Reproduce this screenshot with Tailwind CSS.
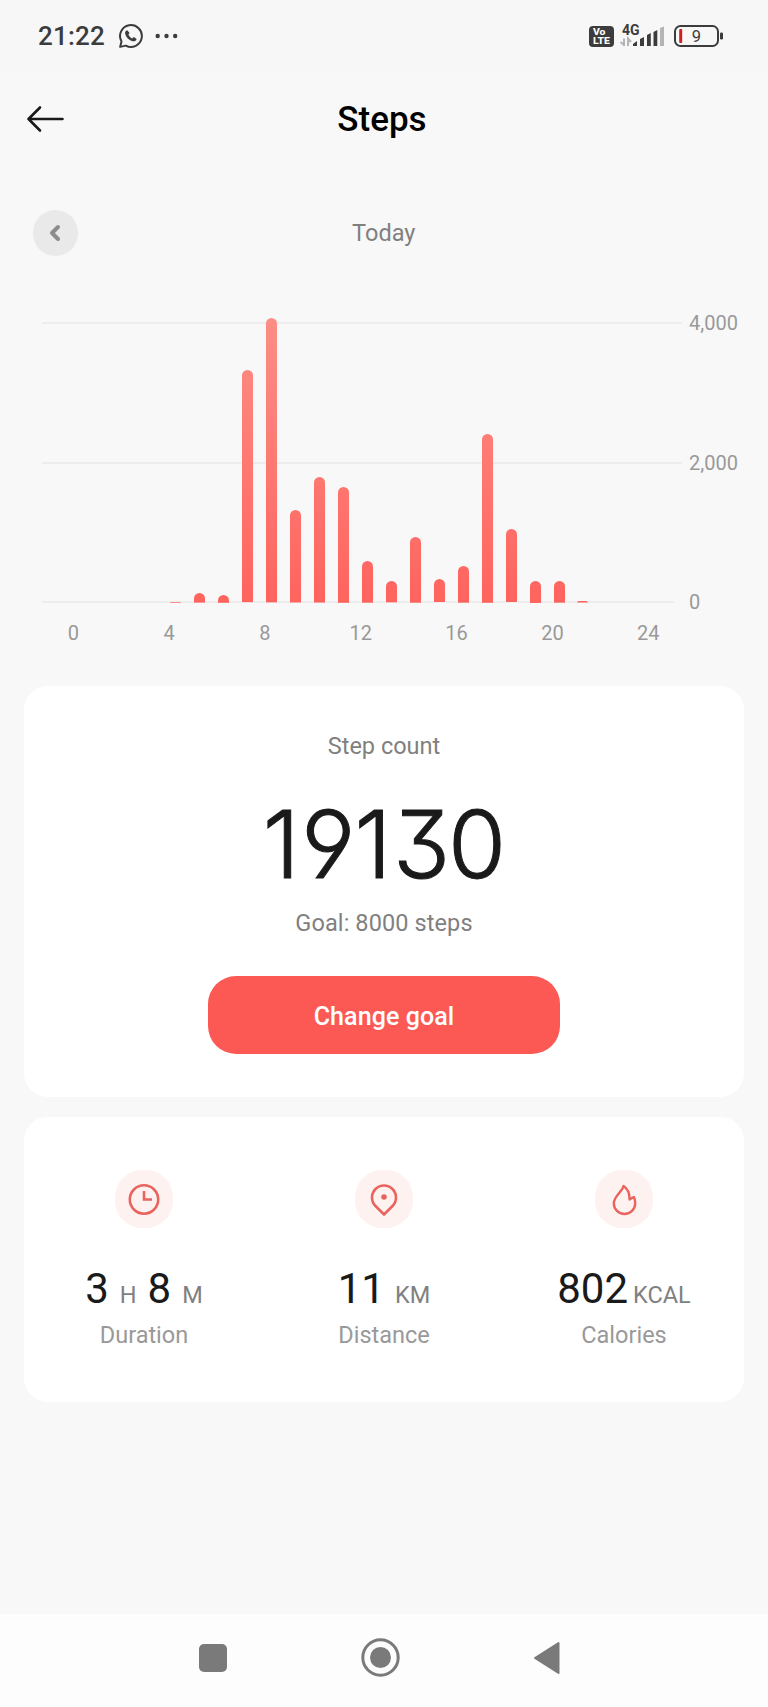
<!DOCTYPE html>
<html lang="en">
<head>
  <meta charset="UTF-8" />
  <meta name="viewport" content="width=device-width, initial-scale=1.0" />
  <title>Steps</title>
  <script src="https://cdn.jsdelivr.net/npm/@tailwindcss/browser@4"></script>
</head>
<body class="bg-[#f8f8f8] font-[Roboto,sans-serif] w-[768px] h-[1707px] flex flex-col overflow-hidden">

  <!-- Status bar -->
  <header class="h-[70px] shrink-0 bg-[#f7f7f7] flex items-center justify-between pl-[38px] pr-[44px] text-[#3c3c3c]">
    <div class="flex items-center h-full pt-0.5">
      <span class="text-[26px] font-medium tracking-[0.2px] leading-8 w-[81px]">21:22</span>
      <svg class="w-6 h-6" viewBox="0 0 24 24" fill="none">
        <path d="M1.100 22.900 2.500 17.400A10.900 10.900 0 1 1 6.800 21.600Z" stroke="currentColor" stroke-width="2" stroke-linejoin="round" />
        <path d="M8.200 6.300c-1.800.5-2.500 2.200-1.900 4 1.100 3.400 3.900 6 7.300 6.900 1.900.5 3.600-.4 4-2.200l-2.700-1.900-1.800 1.300c-1.700-.8-3-2.200-3.700-3.900l1.200-1.500Z" fill="currentColor" />
      </svg>
      <svg class="w-6 h-1.5 ml-3" viewBox="0 0 24 6" fill="currentColor">
        <circle cx="2.700" cy="3" r="2.200" /><circle cx="11.500" cy="3" r="2.200" /><circle cx="20.200" cy="3" r="2.200" />
      </svg>
    </div>
    <div class="flex items-center pt-0.5">
      <svg class="w-[25px] h-[21px]" viewBox="0 0 25 21" font-size="9.500" font-weight="800" fill="#fff">
        <rect width="25" height="21" rx="4" fill="#3c3c3c" />
        <text x="4" y="9.300" textLength="12.500" lengthAdjust="spacingAndGlyphs">Vo</text>
        <text x="4" y="18.300" textLength="17" lengthAdjust="spacingAndGlyphs">LTE</text>
      </svg>
      <svg class="w-[46px] h-6 ml-[5px] overflow-visible" viewBox="0 0 46 24">
        <text x="3" y="11" font-size="14" font-weight="700" fill="#3c3c3c">4G</text>
        <path d="M5 14.500v7.500M5.500 21.500 1.500 18M9 22V14.500l3 3.500" stroke="#b4b4b4" stroke-width="2" fill="none" />
        <path d="M14 22v-2l4-3v5zM21 22v-7l4-2v9zM28 22v-11l3.800-2v13zM34.500 22V8l3.800-2v16z" fill="#3c3c3c" />
        <path d="M41 22V4l4-1.500v19.500z" fill="#b4b4b4" />
      </svg>
      <svg class="w-[50px] h-[22px] ml-[9px]" viewBox="0 0 50 22">
        <rect x="1" y="1" width="43" height="20" rx="5.500" fill="none" stroke="#3c3c3c" stroke-width="2" />
        <rect x="5.200" y="4" width="3" height="14" rx="1" fill="#d01f1f" />
        <rect x="46" y="7.500" width="3" height="7" rx="1.200" fill="#3c3c3c" />
        <text x="22.300" y="17" font-size="16.500" text-anchor="middle" fill="#3c3c3c">9</text>
      </svg>
    </div>
  </header>

  <!-- Title bar -->
  <div class="h-[98px] shrink-0 grid grid-cols-[1fr_auto_1fr] items-center pl-[26px] pr-[30px]">
    <svg class="w-10 h-7" viewBox="0 0 40 28" fill="none" stroke="#1a1a1a" stroke-width="2.600" stroke-linecap="round" stroke-linejoin="round">
      <path d="M36.500 14H2.500M14 2.500 2.500 14 14 25.500" />
    </svg>
    <h1 class="pt-0.5 text-[35px] font-medium text-black leading-10">Steps</h1>
  </div>

  <!-- Day switcher -->
  <div class="mt-[42px] h-[46px] shrink-0 grid grid-cols-[1fr_auto_1fr] items-center pl-[32.500px] pr-[33px]">
    <button class="w-[45.500px] h-[45.500px] rounded-full bg-[#e9e9e9] flex items-center justify-center">
      <svg class="w-[14px] h-5 -ml-[3px]" viewBox="0 0 14 20" fill="none" stroke="#8c8c8c" stroke-width="4" stroke-linecap="round" stroke-linejoin="round">
        <path d="M11 4 5 10l6 6" />
      </svg>
    </button>
    <span class="pt-px text-[23.500px] text-[#808080]">Today</span>
  </div>

  <!-- Hourly chart -->
  <section class="h-[430px] shrink-0 pl-[42px]">
    <div class="grid pt-[55px]">
      <!-- Grid lines with their values -->
      <div class="[grid-area:1/1] flex flex-col text-xl leading-6 text-[#999]">
        <div class="flex items-center h-[139.500px] pb-[115.500px]"><i class="w-[640px] h-0.5 bg-[#ededed]"></i><span class="ml-[7px]">4,000</span></div>
        <div class="flex items-center h-[139.500px] pb-[115.500px]"><i class="w-[640px] h-0.5 bg-[#ededed]"></i><span class="ml-[7px]">2,000</span></div>
        <div class="flex items-center h-6"><i class="w-[632px] h-0.5 bg-[#ededed]"></i><span class="ml-[15px]">0</span></div>
      </div>
      <div id="bars" class="[grid-area:1/1] flex items-end h-[291.500px] w-[574.800px] ml-[26px]"></div>
    </div>
    <div class="flex mt-[7px] -ml-[16.500px] text-xl leading-6 text-[#999]">
      <span class="w-[95.800px] text-center">0</span>
      <span class="w-[95.800px] text-center">4</span>
      <span class="w-[95.800px] text-center">8</span>
      <span class="w-[95.800px] text-center">12</span>
      <span class="w-[95.800px] text-center">16</span>
      <span class="w-[95.800px] text-center">20</span>
      <span class="w-[95.800px] text-center">24</span>
    </div>
  </section>

  <!-- Step count -->
  <section class="mx-6 h-[411px] shrink-0 bg-white rounded-[24px] flex flex-col items-center">
    <p class="mt-[46px] text-[23.500px] leading-7 text-[#808080]">Step count</p>
    <p class="mt-[36px] h-[96px] leading-[96px] text-[94px] font-[Inter] font-light tracking-[-1px] text-[#1a1a1a] [-webkit-text-stroke:1px_#1a1a1a] [font-feature-settings:'cv04','cv09']"><span class="tracking-[1.500px]">1</span>9<span class="tracking-[1.500px]">1</span><span class="tracking-[-2px]">3</span>0</p>
    <p class="mt-[17px] text-[23.500px] leading-7 text-[#808080] tracking-[0.1px]">Goal: 8000 steps</p>
    <button class="mt-[39px] w-[352px] h-[78px] pt-[3px] rounded-[28px] bg-[#fc5955] text-white text-[25px] font-medium tracking-[0.1px]">Change goal</button>
  </section>

  <!-- Totals -->
  <section class="mx-6 mt-5 h-[285px] shrink-0 bg-white rounded-[24px] grid grid-cols-3 text-[#1a1a1a]">
    <div class="flex flex-col items-center pt-[53px]">
      <svg class="w-[58px] h-[58px] rounded-[27px] bg-[#fef2f1]" viewBox="0 0 58 58" fill="none" stroke="#e9645f" stroke-width="2.600">
        <circle cx="29" cy="29.500" r="14.200" />
        <path d="M29 21v8.500h8" />
      </svg>
      <p class="mt-[36px] text-[42px] leading-[50px] flex items-baseline">3<span class="text-[23.500px] text-[#808080] mx-[11px]">H</span>8<span class="text-[23.500px] text-[#808080] ml-[11px]">M</span></p>
      <p class="mt-[1px] text-[23.500px] leading-7 text-[#999]">Duration</p>
    </div>
    <div class="flex flex-col items-center pt-[53px]">
      <svg class="w-[58px] h-[58px] rounded-[27px] bg-[#fef2f1]" viewBox="0 0 58 58" fill="none" stroke="#e9645f" stroke-width="2.600" stroke-linejoin="round">
        <path d="M29 44.500 20.500 36A12 12 0 1 1 37.500 36Z" />
        <circle cx="29" cy="27" r="2.800" fill="#e9645f" stroke="none" />
      </svg>
      <p class="mt-[36px] text-[42px] leading-[50px] flex items-baseline">11<span class="text-[23.500px] text-[#808080] ml-[10px]">KM</span></p>
      <p class="mt-[1px] text-[23.500px] leading-7 text-[#999]">Distance</p>
    </div>
    <div class="flex flex-col items-center pt-[53px]">
      <svg class="w-[58px] h-[58px] rounded-[27px] bg-[#fef2f1]" viewBox="0 0 58 58" fill="none" stroke="#e9645f" stroke-width="2.400" stroke-linejoin="round">
        <path d="M28.500 16C27.500 21.500 18.800 26 18.800 33.300A10.700 10.700 0 0 0 40.200 33.300C40.200 31 40 28.800 38.800 27L34.600 29.400C34.600 24 32.500 18.500 28.500 16Z" />
      </svg>
      <p class="mt-[36px] text-[42px] leading-[50px] flex items-baseline">802<span class="text-[23.500px] text-[#808080] ml-[5px]">KCAL</span></p>
      <p class="mt-[1px] text-[23.500px] leading-7 text-[#999]">Calories</p>
    </div>
  </section>

  <!-- System navigation -->
  <nav class="mt-auto h-[93px] shrink-0 bg-[#fdfdfd] flex items-center pl-[199px] pb-[6px] text-[#7a7a7a]">
    <div class="w-7 h-7 rounded-[5px] bg-[#7a7a7a]"></div>
    <svg class="w-[39px] h-[39px] ml-[134px]" viewBox="0 0 39 39">
      <circle cx="19.500" cy="19.500" r="17.700" fill="none" stroke="currentColor" stroke-width="3" />
      <circle cx="19.500" cy="19.500" r="10.500" fill="currentColor" />
    </svg>
    <svg class="w-7 h-[34px] ml-[133px]" viewBox="0 0 28 34" fill="currentColor" stroke="currentColor" stroke-width="2" stroke-linejoin="round">
      <path d="M2 17 25.500 2v30Z" />
    </svg>
  </nav>

  <script>
    // Steps for each hour of the day
    const steps = [0, 0, 0, 0, 10, 138, 112, 3328, 4077, 1326, 1800, 1660, 598, 306, 942, 330, 526, 2420, 1047, 315, 311, 22, 0, 0];

    const bars = document.getElementById('bars');
    steps.forEach((count) => {
      const slot = document.createElement('div');
      slot.className = 'flex-1 flex justify-center';

      const bar = document.createElement('div');
      bar.className = 'w-[11px] rounded-t-full bg-linear-to-t from-[#ff635e] to-[#fb8f87] bg-[length:100%_292px] bg-bottom bg-no-repeat';
      bar.style.height = (count / 4000) * 279 + 'px';

      slot.appendChild(bar);
      bars.appendChild(slot);
    });
  </script>
</body>
</html>
